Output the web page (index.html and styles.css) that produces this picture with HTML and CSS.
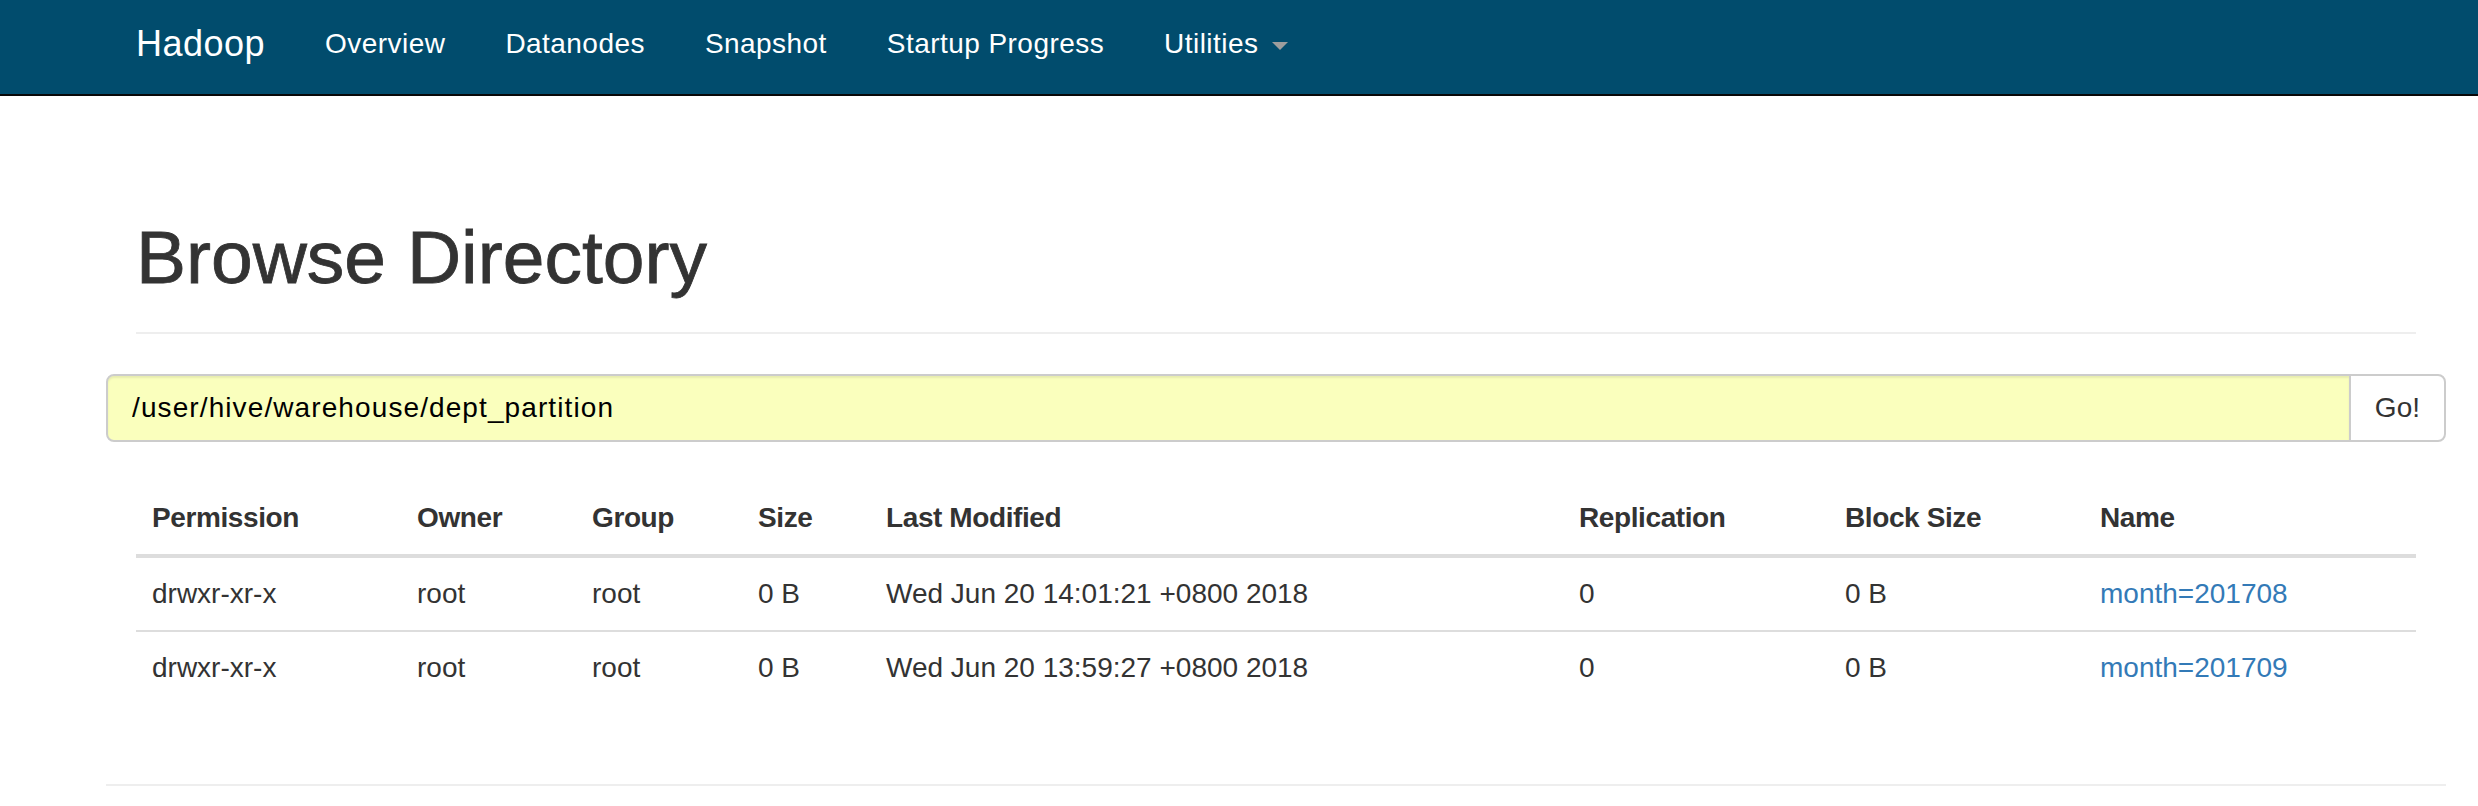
FILE: index.html
```html
<!DOCTYPE html>
<html lang="en">
<head>
<meta charset="utf-8">
<title>Browsing HDFS</title>
<link rel="stylesheet" href="styles.css">
</head>
<body>
<header class="navbar">
  <div class="container nav-inner">
    <a class="brand" href="#">Hadoop</a>
    <ul class="nav">
      <li><a href="#">Overview</a></li>
      <li><a href="#">Datanodes</a></li>
      <li><a href="#">Snapshot</a></li>
      <li><a href="#">Startup Progress</a></li>
      <li><a href="#">Utilities <span class="caret"></span></a></li>
    </ul>
  </div>
</header>

<main class="container">
  <div class="page-header">
    <h1>Browse Directory</h1>
  </div>

  <form class="dir-form" onsubmit="return false;">
    <div class="input-group">
      <input type="text" class="dir-input" value="/user/hive/warehouse/dept_partition">
      <button class="go-btn" type="button">Go!</button>
    </div>
  </form>

  <table class="explorer">
    <colgroup>
      <col class="c-perm"><col class="c-owner"><col class="c-group"><col class="c-size">
      <col class="c-mod"><col class="c-rep"><col class="c-bs"><col class="c-name">
    </colgroup>
    <thead>
      <tr>
        <th>Permission</th><th>Owner</th><th>Group</th><th>Size</th>
        <th>Last Modified</th><th>Replication</th><th>Block Size</th><th>Name</th>
      </tr>
    </thead>
    <tbody>
      <tr>
        <td>drwxr-xr-x</td><td>root</td><td>root</td><td>0 B</td>
        <td>Wed Jun 20 14:01:21 +0800 2018</td><td>0</td><td>0 B</td>
        <td><a class="name-link" href="#">month=201708</a></td>
      </tr>
      <tr>
        <td>drwxr-xr-x</td><td>root</td><td>root</td><td>0 B</td>
        <td>Wed Jun 20 13:59:27 +0800 2018</td><td>0</td><td>0 B</td>
        <td><a class="name-link" href="#">month=201709</a></td>
      </tr>
    </tbody>
  </table>

  <div class="footer-row">
    <hr class="footer-rule">
  </div>
</main>
</body>
</html>
```
FILE: styles.css
```css
* { box-sizing: border-box; }

html, body {
  margin: 0;
  padding: 0;
  background: #fff;
}

body {
  font-family: "Liberation Sans", Arial, Helvetica, sans-serif;
  font-size: 28px;
  line-height: 40px;
  color: #333;
  overflow: hidden;
}

.container {
  width: 2340px;
  margin-left: 106px;
  padding: 0 30px;
}

/* ---------- navbar ---------- */
.navbar {
  background: #014c6d;
  border-bottom: 2px solid #080808;
  height: 96px;
}

.nav-inner {
  display: flex;
  align-items: flex-start;
  padding-top: 24px;
}

.brand {
  font-size: 36px;
  line-height: 40px;
  color: #fff;
  text-decoration: none;
  letter-spacing: 0.5px;
  padding-right: 30px;
}

.nav {
  display: flex;
  list-style: none;
  margin: 0;
  padding: 0;
}

.nav a {
  display: block;
  padding: 0 30px;
  font-size: 28px;
  line-height: 40px;
  color: #fff;
  text-decoration: none;
  letter-spacing: 0.45px;
}

.caret {
  display: inline-block;
  width: 0;
  height: 0;
  margin-left: 5px;
  vertical-align: middle;
  border-top: 8px solid #9d9d9d;
  border-left: 8px solid transparent;
  border-right: 8px solid transparent;
}

/* ---------- page header ---------- */
.page-header {
  padding: 121px 0 18px;
  margin: 0 0 40px;
  border-bottom: 2px solid #eee;
}

.page-header h1 {
  margin: 0 0 17px;
  font-size: 75px;
  line-height: 80px;
  font-weight: normal;
  color: #333;
  -webkit-text-stroke: 0.8px #333;
}

/* ---------- directory form ---------- */
.dir-form {
  margin: 0 -30px;
}

.input-group {
  display: flex;
  height: 68px;
}

.dir-input {
  flex: 1;
  height: 68px;
  margin: 0;
  padding: 0 24px;
  border: 2px solid #ccc;
  border-radius: 8px 0 0 8px;
  background: #faffbd;
  color: #000;
  font-family: "Liberation Sans", Arial, Helvetica, sans-serif;
  font-size: 28px;
  letter-spacing: 1.1px;
  outline: none;
  box-shadow: inset 0 2px 2px rgba(0, 0, 0, 0.075);
}

.go-btn {
  height: 68px;
  margin: 0 0 0 -2px;
  padding: 0 24px;
  border: 2px solid #ccc;
  border-radius: 0 8px 8px 0;
  background: #fff;
  color: #333;
  font-family: "Liberation Sans", Arial, Helvetica, sans-serif;
  font-size: 28px;
  line-height: 40px;
}

/* ---------- table ---------- */
.explorer {
  width: 100%;
  margin-top: 40px;
  border-collapse: collapse;
  border-spacing: 0;
  table-layout: fixed;
}

.c-perm { width: 265px; }
.c-owner { width: 175px; }
.c-group { width: 166px; }
.c-size { width: 128px; }
.c-mod { width: 693px; }
.c-rep { width: 266px; }
.c-bs { width: 255px; }
.c-name { width: 332px; }

.explorer th {
  text-align: left;
  font-weight: bold;
  letter-spacing: -0.4px;
  padding: 16px;
  line-height: 40px;
  vertical-align: bottom;
  border-bottom: 4px solid #ddd;
  white-space: nowrap;
}

.explorer td {
  padding: 16px;
  line-height: 40px;
  border-top: 2px solid #ddd;
  white-space: nowrap;
}

.name-link {
  color: #337ab7;
  text-decoration: none;
}

/* ---------- footer ---------- */
.footer-row {
  margin: 0 -30px;
  padding-top: 80px;
}

.footer-rule {
  margin: 0;
  border: 0;
  border-top: 2px solid #eee;
}
```
